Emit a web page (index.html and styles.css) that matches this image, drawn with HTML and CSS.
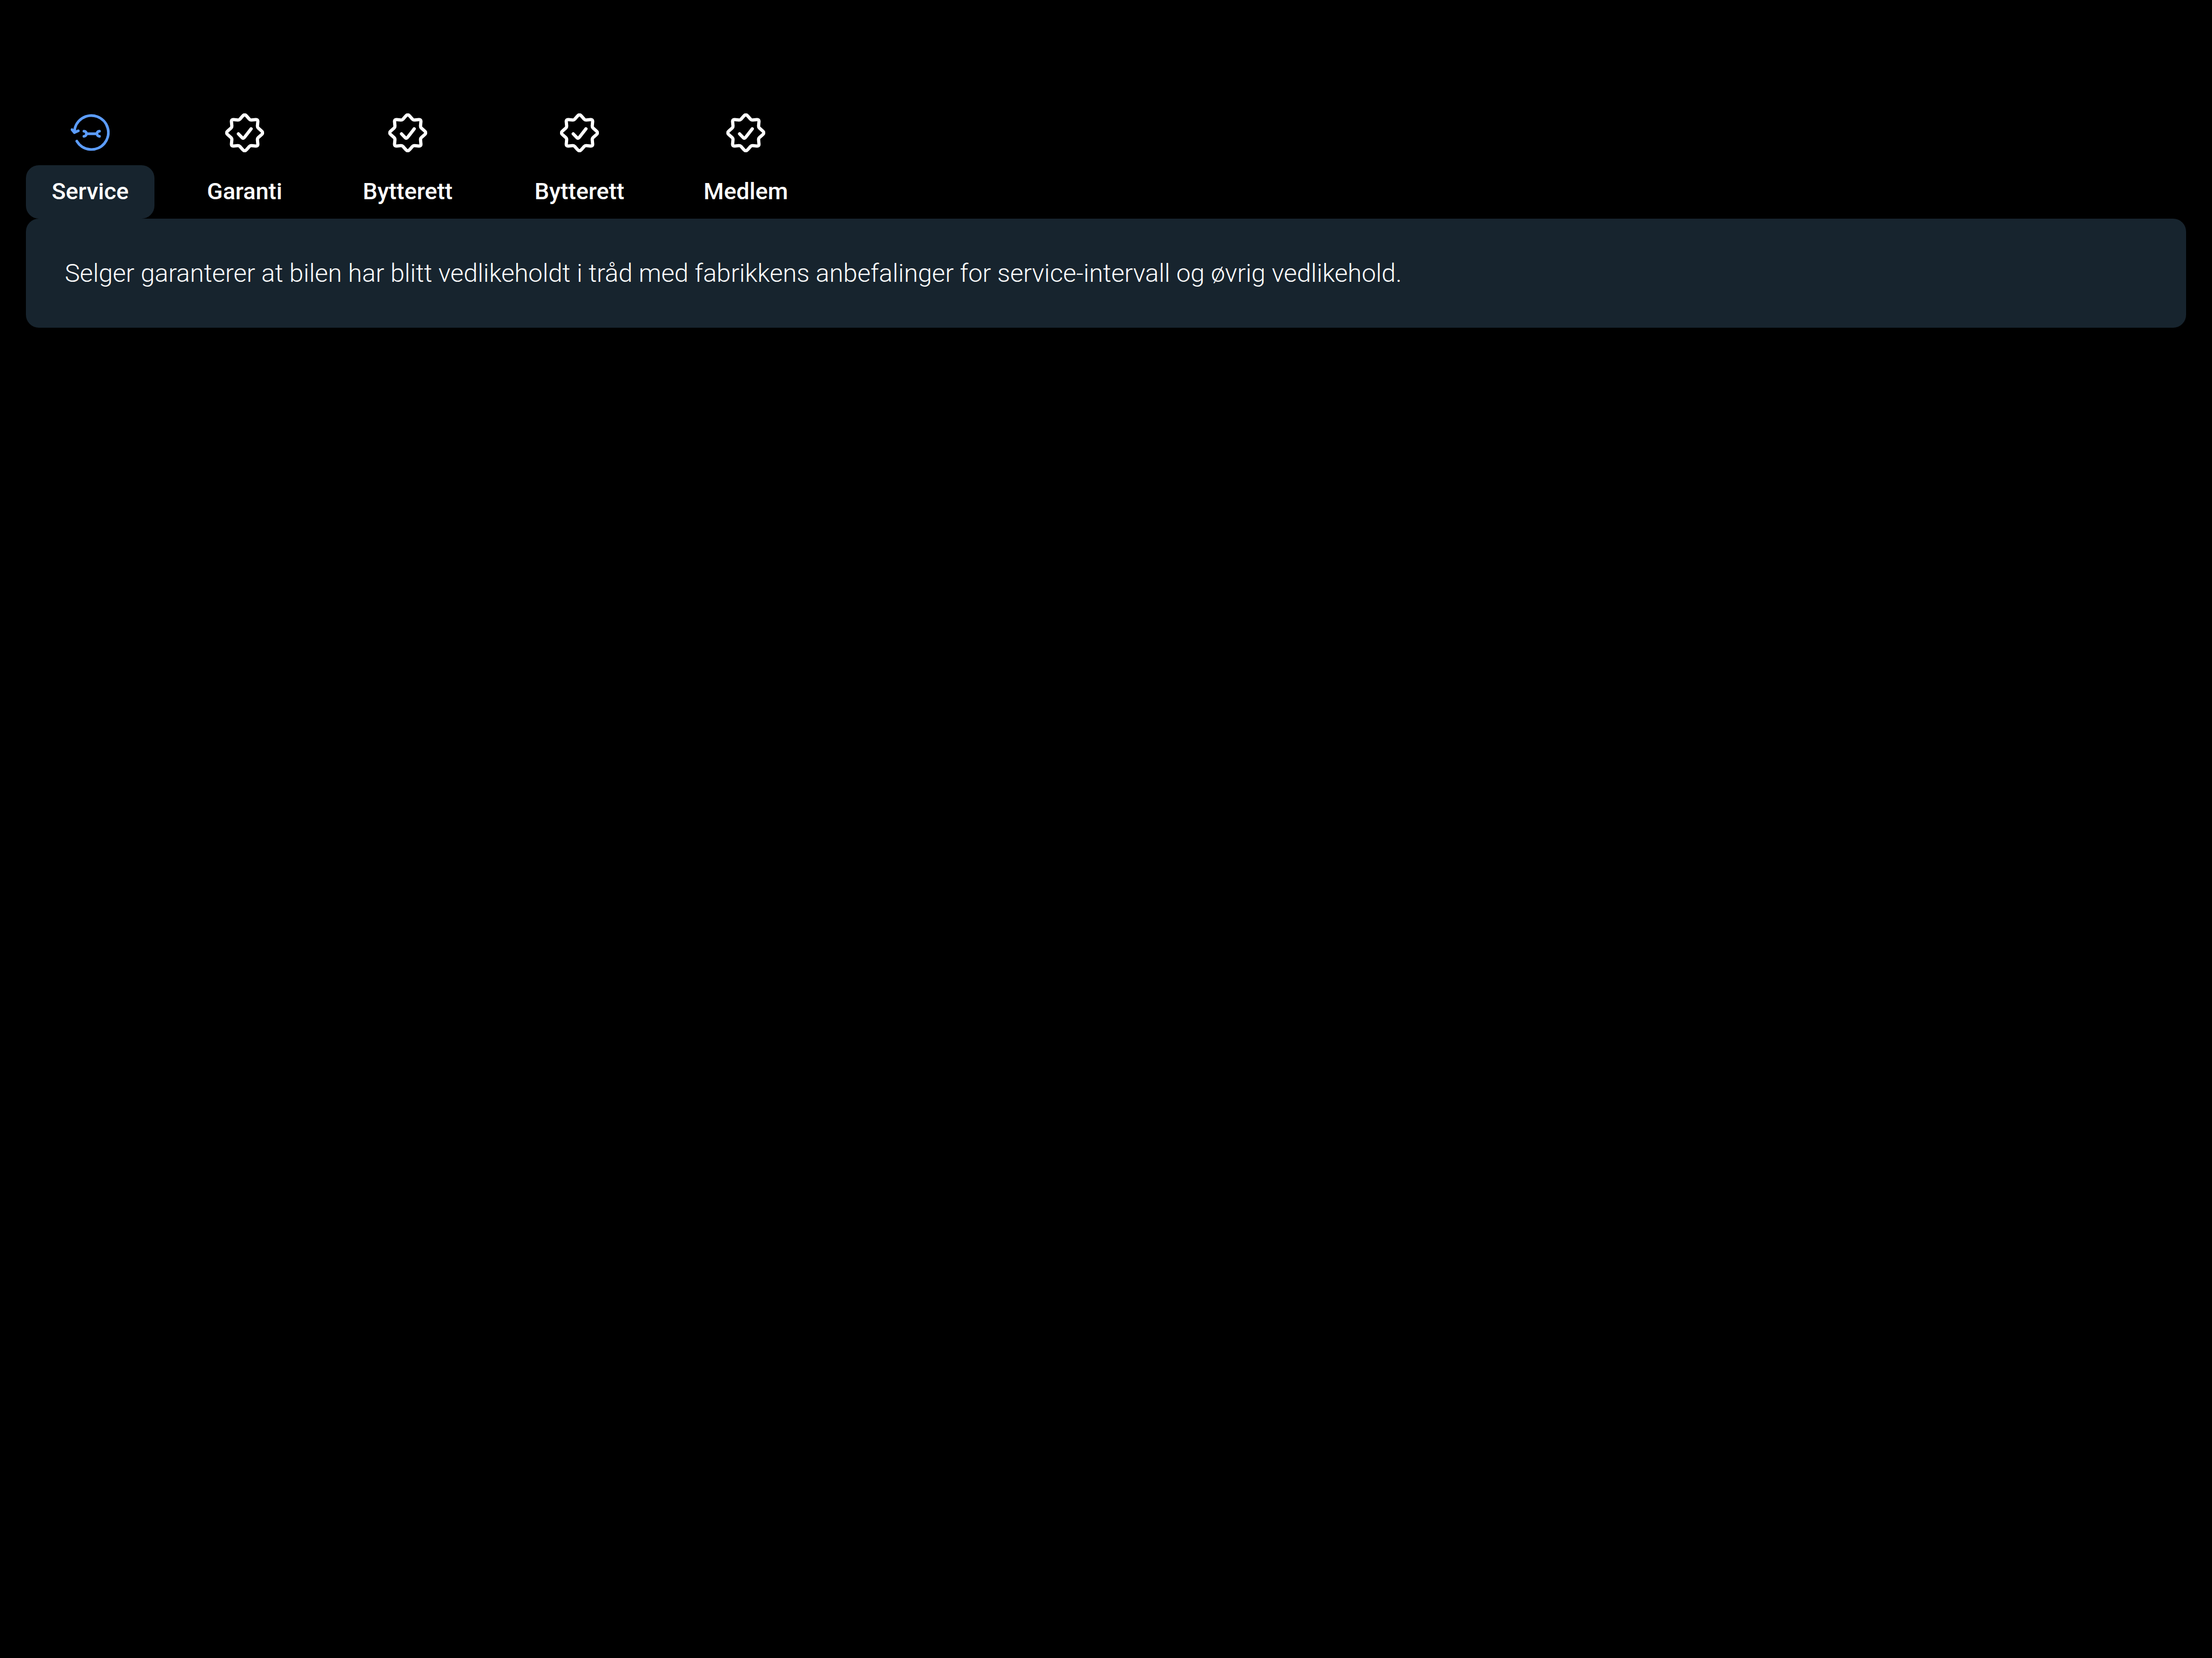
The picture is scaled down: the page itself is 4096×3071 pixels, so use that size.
FILE: index.html
```html
<!DOCTYPE html>
<html lang="nb">
<head>
<meta charset="utf-8">
<meta name="viewport" content="width=device-width, initial-scale=1">
<title>Service</title>
<link rel="stylesheet" href="styles.css">
</head>
<body>
<svg class="sprite" aria-hidden="true">
  <symbol id="badge" viewBox="0 0 72 72">
    <path d="M32.5 4.8Q36 .5 39.5 4.8L45 11Q46.5 12.5 49 12.3L56.5 11.6Q60.9 11.1 60.4 15.5L59.7 23Q59.5 25.5 61 27L67.2 32.5Q71.5 36 67.2 39.5L61 45Q59.5 46.5 59.7 49L60.4 56.5Q60.9 60.9 56.5 60.4L49 59.7Q46.5 59.5 45 61L39.5 67.2Q36 71.5 32.5 67.2L27 61Q25.5 59.5 23 59.7L15.5 60.4Q11.1 60.9 11.6 56.5L12.3 49Q12.5 46.5 11 45L4.8 39.5Q.5 36 4.8 32.5L11 27Q12.5 25.5 12.3 23L11.6 15.5Q11.1 11.1 15.5 11.6L23 12.3Q25.5 12.5 27 11Z"/>
    <path d="M24.5 38L31.5 45.2Q33.6 47 35.2 45L48 28.7"/>
  </symbol>
  <symbol id="service" viewBox="0 0 72 72">
    <path d="M6.8 35A31.4 31.4 0 1 1 11.2 51.5"/>
    <path d="M2.3 30.2L6.9 35.6L14 32.3"/>
    <path d="M24.4 33C30.6 33 30.6 42.4 24.4 42.4M29.5 37.7H48M53.2 33C47 33 47 42.4 53.2 42.4"/>
  </symbol>
</svg>
<main class="page">
  <div class="tabs" role="tablist">
    <button class="tab tab-active" id="tab-service" type="button" role="tab" aria-selected="true" aria-controls="panel">
      <svg class="icon icon-service" aria-hidden="true"><use href="#service"/></svg>
      <span class="label">Service</span>
    </button>
    <button class="tab" type="button" role="tab" aria-selected="false">
      <svg class="icon" aria-hidden="true"><use href="#badge"/></svg>
      <span class="label">Garanti</span>
    </button>
    <button class="tab" type="button" role="tab" aria-selected="false">
      <svg class="icon" aria-hidden="true"><use href="#badge"/></svg>
      <span class="label">Bytterett</span>
    </button>
    <button class="tab" type="button" role="tab" aria-selected="false">
      <svg class="icon" aria-hidden="true"><use href="#badge"/></svg>
      <span class="label">Bytterett</span>
    </button>
    <button class="tab" type="button" role="tab" aria-selected="false">
      <svg class="icon" aria-hidden="true"><use href="#badge"/></svg>
      <span class="label">Medlem</span>
    </button>
  </div>
  <section class="panel" id="panel" role="tabpanel" aria-labelledby="tab-service">
    <p>Selger garanterer at bilen har blitt vedlikeholdt i tråd med fabrikkens anbefalinger for service-intervall og øvrig vedlikehold.</p>
  </section>
</main>
</body>
</html>
```
FILE: styles.css
```css
:root {
  --surface: #17242e;
  --accent: #5c9dff;
}

body {
  margin: 0;
  background: #000;
  color: #fff;
  font-family: Roboto, "Liberation Sans", sans-serif;
}

.sprite {
  display: none;
}

.page {
  padding: 210px 48px 48px;
}

.tabs {
  display: grid;
  grid-template-columns: 238px 238px 270px 270px 250px;
  column-gap: 48px;
}

.tab {
  display: flex;
  flex-direction: column;
  align-items: center;
  gap: 24px;
  padding: 0;
  border: 0;
  background: none;
  color: inherit;
  font: 500 43px/63px Roboto, "Liberation Sans", sans-serif;
  cursor: pointer;
}

.icon {
  width: 72px;
  height: 72px;
  fill: none;
  stroke: currentColor;
  stroke-width: 6;
  stroke-linecap: round;
  stroke-linejoin: round;
}

.icon-service {
  color: var(--accent);
  stroke-width: 5;
}

.label {
  box-sizing: border-box;
  width: 100%;
  padding: 17px 0 19px;
  border-radius: 24px;
  text-align: center;
}

.tab-active .label {
  background: var(--surface);
}

.panel {
  padding: 68px 72px;
  border-radius: 24px;
  background: var(--surface);
}

.panel p {
  margin: 0;
  font-size: 47px;
  font-weight: 300;
  line-height: 66px;
}
```
